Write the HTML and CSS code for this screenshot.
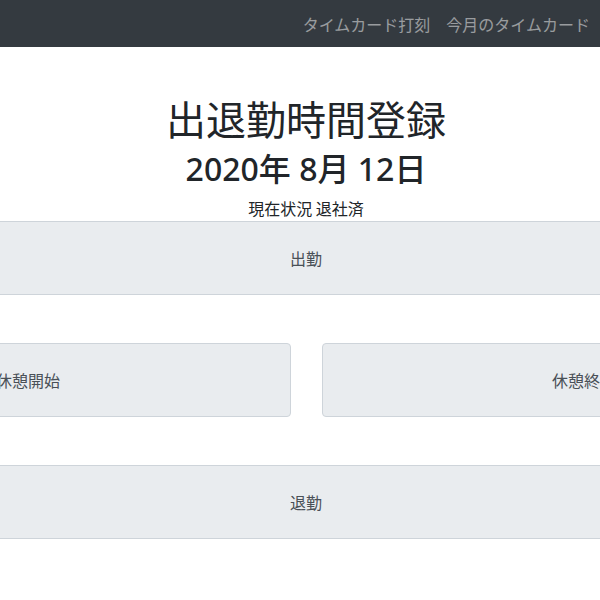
FILE: index.html
```html
<!DOCTYPE html>
<html lang="ja">
<head>
<meta charset="utf-8">
<link rel="stylesheet" href="styles.css">
</head>
<body>
<nav class="navbar">
  <a class="nav-link" href="#">タイムカード打刻</a>
  <a class="nav-link" href="#">今月のタイムカード</a>
</nav>
<main class="page">
  <div class="inner">
    <h1 class="title">出退勤時間登録</h1>
    <h2 class="date">2020年 8月 12日</h2>
    <p class="status">現在状況 退社済</p>
    <button class="btn">出勤</button>
    <div class="pair">
      <button class="btn">休憩開始</button>
      <button class="btn">休憩終了</button>
    </div>
    <button class="btn">退勤</button>
  </div>
</main>
</body>
</html>
```
FILE: styles.css
```css
html, body {
  margin: 0;
  padding: 0;
  overflow: hidden;
  background: #fff;
}
body {
  font-family: "Noto Sans", "Noto Sans CJK JP", sans-serif;
  color: #212529;
  font-size: 16px;
}
.navbar {
  height: 47px;
  background: #343a40;
  display: flex;
  justify-content: flex-end;
  align-items: center;
  padding-right: 2px;
  box-sizing: border-box;
}
.nav-link {
  color: rgba(255, 255, 255, 0.5);
  text-decoration: none;
  padding: 0 8px;
  font-size: 16px;
  line-height: 24px;
  font-family: "Noto Sans CJK JP", sans-serif;
}
.page {
  display: flex;
  justify-content: center;
  padding-left: 12px;
}
.inner {
  flex: 0 0 1081px;
  display: flex;
  flex-direction: column;
  align-items: center;
}
.title {
  margin: 47px 0 0;
  font-size: 40px;
  font-weight: 400;
  line-height: 48px;
  font-family: "Noto Sans CJK JP", sans-serif;
}
.date {
  margin: 8px 0 0;
  font-size: 32px;
  font-weight: 500;
  line-height: 38px;
}
.status {
  margin: 8px 0 1px;
  line-height: 24px;
  font-family: "Noto Sans CJK JP", sans-serif;
}
.btn {
  width: 1081px;
  height: 74px;
  background: #e9ecef;
  border: 1px solid #ced4da;
  border-radius: 4px;
  color: #495057;
  font-size: 16px;
  font-family: "Noto Sans CJK JP", sans-serif;
  box-sizing: border-box;
  padding: 0;
}
.pair {
  margin: 48px 0 48px;
  display: flex;
  gap: 31px;
  width: 1081px;
}
.pair .btn {
  flex: 1;
  width: auto;
}
```
